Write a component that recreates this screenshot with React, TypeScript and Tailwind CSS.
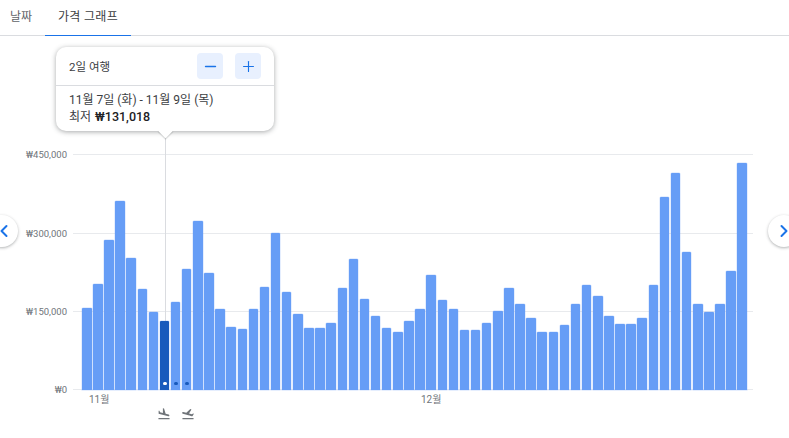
import { ChevronLeft, ChevronRight, Minus, Plus } from "lucide-react";
import { MdFlightLand, MdFlightTakeoff } from "react-icons/md";

const BASELINE = 390;
// y of each bar's top in the chart
const barTops = [
    308, 284, 240, 201, 258, 289, 312, 321, 302, 269, 221, 273, 309, 327, 329, 309, 287, 233, 292, 314,
    328, 328, 323, 288, 259, 299, 316, 328, 332, 321, 309, 275, 300, 309, 330, 330, 323, 311, 288, 304,
    318, 332, 332, 325, 304, 285, 296, 316, 324, 324, 318, 285, 197, 173, 252, 304, 312, 304, 271, 163,
];

const selectedIndex = 7;
const gridLines = [
    { label: "₩450,000", top: 0 },
    { label: "₩300,000", top: 79 },
    { label: "₩150,000", top: 157 },
    { label: "₩0", top: 235 },
];

function DurationButton({ children }: { children: React.ReactNode }) {
    return (
        <button className="w-[26px] h-[26px] flex items-center justify-center rounded-[4px] bg-[#e8f0fe] text-[#1a73e8]">
            {children}
        </button>
    );
}

function NavButton({ side }: { side: "left" | "right" }) {
    const isLeft = side === "left";
    return (
        <button
            className={`absolute top-[215px] w-[32px] h-[32px] rounded-full bg-white shadow-[0_1px_3px_rgba(60,64,67,0.4)] flex items-center justify-center text-[#1a73e8] ${
                isLeft ? "left-[-14px] pl-[4px]" : "left-[768px]"
            }`}
        >
            {isLeft ? (
                <ChevronLeft className="w-[20px] h-[20px] shrink-0" strokeWidth={2.4} />
            ) : (
                <ChevronRight className="w-[20px] h-[20px] shrink-0" strokeWidth={2.4} />
            )}
        </button>
    );
}

export default function App() {
    return (
        <div className="relative w-[789px] h-[438px] overflow-hidden bg-white font-['Roboto','Noto_Sans_CJK_KR',sans-serif] text-[#3c4043]">
            {/* Tabs */}
            <div className="flex h-[36px] border-b border-[#dadce0] text-[12px] leading-[34px] pl-[10px]">
                <div className="text-[#5f6368] w-[35px]">날짜</div>
                <div className="w-[86px] h-[36px] text-center border-b border-[#1a73e8] tracking-[0.3px] text-[#3c4043]">가격 그래프</div>
            </div>

            {/* Chart */}
            <div className="flex pt-[118px]">
                <div className="relative w-[73px] h-[236px] shrink-0 text-[9.5px] text-[#70757a]">
                    {gridLines.map((line) => (
                        <div
                            key={line.label}
                            className="absolute right-[6px] leading-[12px] -translate-y-1/2 mt-px"
                            style={{ top: line.top }}
                        >
                            {line.label}
                        </div>
                    ))}
                </div>
                <div className="relative w-[680px] h-[236px]">
                    {gridLines.map((line) => (
                        <div
                            key={line.label}
                            className="absolute left-0 right-0 h-px bg-[#e8eaed]"
                            style={{ top: line.top }}
                        />
                    ))}
                    <div className="absolute left-[91.5px] top-[-23px] bottom-0 w-px bg-[#dadce0]" />
                    <div className="absolute left-[9px] right-[5.7px] top-0 bottom-0 flex items-end gap-[1.62px]">
                        {barTops.map((top, i) => (
                            <div
                                key={i}
                                className={`relative flex-1 rounded-t-[1px] shadow-[0_0_0_0.5px_rgba(102,157,246,0.35)] ${
                                    i === selectedIndex ? "bg-[#185abc]" : "bg-[#669df6]"
                                }`}
                                style={{ height: BASELINE - top }}
                            >
                                {i >= selectedIndex && i <= selectedIndex + 2 && (
                                    <div
                                        className={`absolute bottom-[5px] left-[3.4px] w-[3.4px] h-[3px] rounded-full ${
                                            i === selectedIndex ? "bg-white" : "bg-[#185abc]"
                                        }`}
                                    />
                                )}
                            </div>
                        ))}
                    </div>
                </div>
            </div>

            {/* Month labels */}
            <div className="flex pl-[89px] pt-[3px] text-[10px] leading-[14px] text-[#70757a]">
                <div className="w-[332px]">11월</div>
                <div>12월</div>
            </div>

            {/* Departure and return markers */}
            <div className="flex pl-[157px] gap-[9.5px] text-[#70757a]">
                <MdFlightLand className="w-[14px] h-[14px]" />
                <MdFlightTakeoff className="w-[14px] h-[14px] -scale-x-100" />
            </div>

            {/* Trip popup */}
            <div className="absolute left-[56px] top-[47px] w-[218px] h-[84px] rounded-[10px] bg-white shadow-[0_1px_5px_rgba(60,64,67,0.45)]">
                <div className="flex items-center justify-between h-[39px] px-[13px] border-b border-[#dadce0] text-[11.5px]">
                    <span className="text-[#3c4043] pt-[3px]">2일 여행</span>
                    <div className="flex gap-[12px]">
                        <DurationButton>
                            <Minus className="w-[17px] h-[17px]" strokeWidth={2} />
                        </DurationButton>
                        <DurationButton>
                            <Plus className="w-[17px] h-[17px]" strokeWidth={1.6} />
                        </DurationButton>
                    </div>
                </div>
                <div className="pl-[13px] pt-[7px] text-[12px] leading-[15.5px]">
                    <div>11월 7일 (화) - 11월 9일 (목)</div>
                    <div>
                        최저 <span className="ml-px font-medium text-[#202124] text-[12.5px]">₩131,018</span>
                    </div>
                </div>
                <div className="absolute left-[103.5px] bottom-[-5px] w-[11px] h-[11px] rotate-45 bg-white shadow-[1px_1px_1px_rgba(60,64,67,0.2)]" />
            </div>

            <NavButton side="left" />
            <NavButton side="right" />
        </div>
    );
}
